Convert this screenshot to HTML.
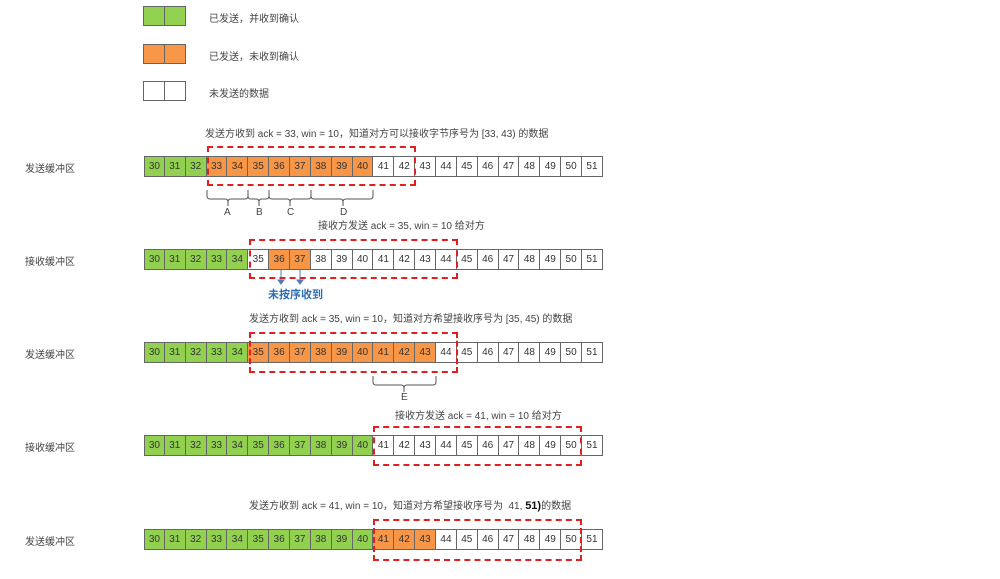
<!DOCTYPE html>
<html><head><meta charset="utf-8"><style>
body{margin:0;width:1000px;height:579px;background:#fff;position:relative;overflow:hidden;font-family:"Liberation Sans","Noto Sans CJK SC",sans-serif;color:#444}
.row{position:absolute;left:144px;display:flex;height:21px}
.row span{width:21.86px;height:21px;box-sizing:border-box;border:1px solid #666;margin-left:-1px;font-size:10px;line-height:19px;text-align:center;background:#fff;color:#333;flex:none}
.row span:first-child{margin-left:0;width:20.86px}
.g{background:#92d050!important}.o{background:#f79646!important}
.t{position:absolute;font-size:10px;white-space:nowrap;color:#444}
.lb{position:absolute;left:25px;font-size:10px;color:#444}
.d{position:absolute;border:2px dashed #e02020;box-sizing:border-box}
.lg{position:absolute;left:144px;width:42px;height:20px;display:flex}
.lg i{flex:1;border:1px solid #666;margin-left:-1px}
</style></head><body>
<div class="lg" style="top:6px"><i class="g"></i><i class="g"></i></div>
<div class="lg" style="top:44px"><i class="o"></i><i class="o"></i></div>
<div class="lg" style="top:81px"><i></i><i></i></div>
<div class="t" style="left:209px;top:10px">已发送，并收到确认</div>
<div class="t" style="left:209px;top:48px">已发送，未收到确认</div>
<div class="t" style="left:209px;top:85px">未发送的数据</div>

<div class="t" style="left:205px;top:125px">发送方收到 ack = 33, win = 10，知道对方可以接收字节序号为 [33, 43) 的数据</div>
<div class="lb" style="top:160px">发送缓冲区</div>
<div class="row" style="top:156px"><span class="g">30</span><span class="g">31</span><span class="g">32</span><span class="o">33</span><span class="o">34</span><span class="o">35</span><span class="o">36</span><span class="o">37</span><span class="o">38</span><span class="o">39</span><span class="o">40</span><span>41</span><span>42</span><span>43</span><span>44</span><span>45</span><span>46</span><span>47</span><span>48</span><span>49</span><span>50</span><span>51</span></div>
<div class="d" style="left:207px;top:146px;width:209px;height:40px"></div>
<svg style="position:absolute;left:0;top:0" width="1000" height="579">
<g fill="none" stroke="#555" stroke-width="1">
<path d="M207 190v6q0 3 3 3h15q3 0 3 3v4M228 202q0-3 3-3h14q3 0 3-3v-6"/>
<path d="M248 190v6q0 3 3 3h5q3 0 3 3v4M259 202q0-3 3-3h4q3 0 3-3v-6"/>
<path d="M269 190v6q0 3 3 3h15q3 0 3 3v4M290 202q0-3 3-3h15q3 0 3-3v-6"/>
<path d="M311 190v6q0 3 3 3h26q3 0 3 3v4M343 202q0-3 3-3h24q3 0 3-3v-6"/>
<path d="M373 376v6q0 3 3 3h25q3 0 3 3v4M404 388q0-3 3-3h26q3 0 3-3v-6"/>
</g>
<g stroke="#4a7ebb" fill="#4a7ebb"><path d="M281 270v10"/><path d="M278 280h6l-3 4z"/><path d="M300 270v10"/><path d="M297 280h6l-3 4z"/></g>
</svg>
<div class="t" style="left:224px;top:207px">A</div>
<div class="t" style="left:256px;top:207px">B</div>
<div class="t" style="left:287px;top:207px">C</div>
<div class="t" style="left:340px;top:207px">D</div>
<div class="t" style="left:318px;top:217px">接收方发送 ack = 35, win = 10 给对方</div>

<div class="lb" style="top:253px">接收缓冲区</div>
<div class="row" style="top:249px"><span class="g">30</span><span class="g">31</span><span class="g">32</span><span class="g">33</span><span class="g">34</span><span>35</span><span class="o">36</span><span class="o">37</span><span>38</span><span>39</span><span>40</span><span>41</span><span>42</span><span>43</span><span>44</span><span>45</span><span>46</span><span>47</span><span>48</span><span>49</span><span>50</span><span>51</span></div>
<div class="d" style="left:249px;top:239px;width:209px;height:40px"></div>
<div class="t" style="left:268px;top:286px;color:#2e6db4;font-weight:bold;font-size:11px">未按序收到</div>

<div class="t" style="left:249px;top:310px">发送方收到 ack = 35, win = 10，知道对方希望接收序号为 [35, 45) 的数据</div>
<div class="lb" style="top:346px">发送缓冲区</div>
<div class="row" style="top:342px"><span class="g">30</span><span class="g">31</span><span class="g">32</span><span class="g">33</span><span class="g">34</span><span class="o">35</span><span class="o">36</span><span class="o">37</span><span class="o">38</span><span class="o">39</span><span class="o">40</span><span class="o">41</span><span class="o">42</span><span class="o">43</span><span>44</span><span>45</span><span>46</span><span>47</span><span>48</span><span>49</span><span>50</span><span>51</span></div>
<div class="d" style="left:249px;top:332px;width:209px;height:41px"></div>
<div class="t" style="left:401px;top:392px">E</div>

<div class="t" style="left:395px;top:407px">接收方发送 ack = 41, win = 10 给对方</div>
<div class="lb" style="top:439px">接收缓冲区</div>
<div class="row" style="top:435px"><span class="g">30</span><span class="g">31</span><span class="g">32</span><span class="g">33</span><span class="g">34</span><span class="g">35</span><span class="g">36</span><span class="g">37</span><span class="g">38</span><span class="g">39</span><span class="g">40</span><span>41</span><span>42</span><span>43</span><span>44</span><span>45</span><span>46</span><span>47</span><span>48</span><span>49</span><span>50</span><span>51</span></div>
<div class="d" style="left:373px;top:426px;width:209px;height:40px"></div>

<div class="t" style="left:249px;top:497px">发送方收到 ack = 41, win = 10，知道对方希望接收序号为 &nbsp;41, <b style="color:#111;font-size:11px">51)</b>的数据</div>
<div class="lb" style="top:533px">发送缓冲区</div>
<div class="row" style="top:529px"><span class="g">30</span><span class="g">31</span><span class="g">32</span><span class="g">33</span><span class="g">34</span><span class="g">35</span><span class="g">36</span><span class="g">37</span><span class="g">38</span><span class="g">39</span><span class="g">40</span><span class="o">41</span><span class="o">42</span><span class="o">43</span><span>44</span><span>45</span><span>46</span><span>47</span><span>48</span><span>49</span><span>50</span><span>51</span></div>
<div class="d" style="left:373px;top:519px;width:209px;height:42px"></div>
</body></html>
